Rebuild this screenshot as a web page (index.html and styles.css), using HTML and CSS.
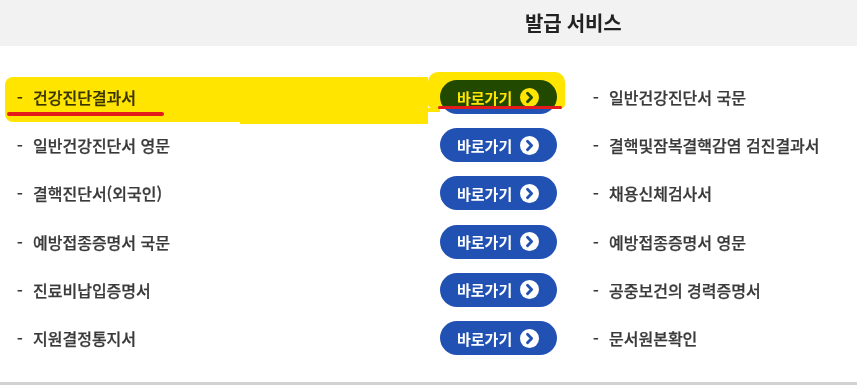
FILE: index.html
```html
<!DOCTYPE html>
<html lang="ko">
<head>
<meta charset="utf-8">
<link rel="stylesheet" href="styles.css">
</head>
<body>
<div class="page">
  <header class="head"><h1 class="title">발급 서비스</h1></header>
  <section class="list">
    <div class="row">
      <div class="item"><span class="dash">-</span>건강진단결과서</div>
      <a class="go">바로가기<svg class="ico" viewBox="0 0 18 18"><circle cx="9" cy="9" r="9" fill="#fff"/><path d="M7.1 4.9 L11 9 L7.1 13.1" fill="none" stroke="#2152b3" stroke-width="2.7" stroke-linecap="round" stroke-linejoin="round"/></svg></a>
      <div class="item right"><span class="dash">-</span>일반건강진단서 국문</div>
    </div>
    <div class="row">
      <div class="item"><span class="dash">-</span>일반건강진단서 영문</div>
      <a class="go">바로가기<svg class="ico" viewBox="0 0 18 18"><circle cx="9" cy="9" r="9" fill="#fff"/><path d="M7.1 4.9 L11 9 L7.1 13.1" fill="none" stroke="#2152b3" stroke-width="2.7" stroke-linecap="round" stroke-linejoin="round"/></svg></a>
      <div class="item right"><span class="dash">-</span>결핵및잠복결핵감염 검진결과서</div>
    </div>
    <div class="row">
      <div class="item"><span class="dash">-</span>결핵진단서(외국인)</div>
      <a class="go">바로가기<svg class="ico" viewBox="0 0 18 18"><circle cx="9" cy="9" r="9" fill="#fff"/><path d="M7.1 4.9 L11 9 L7.1 13.1" fill="none" stroke="#2152b3" stroke-width="2.7" stroke-linecap="round" stroke-linejoin="round"/></svg></a>
      <div class="item right"><span class="dash">-</span>채용신체검사서</div>
    </div>
    <div class="row">
      <div class="item"><span class="dash">-</span>예방접종증명서 국문</div>
      <a class="go">바로가기<svg class="ico" viewBox="0 0 18 18"><circle cx="9" cy="9" r="9" fill="#fff"/><path d="M7.1 4.9 L11 9 L7.1 13.1" fill="none" stroke="#2152b3" stroke-width="2.7" stroke-linecap="round" stroke-linejoin="round"/></svg></a>
      <div class="item right"><span class="dash">-</span>예방접종증명서 영문</div>
    </div>
    <div class="row">
      <div class="item"><span class="dash">-</span>진료비납입증명서</div>
      <a class="go">바로가기<svg class="ico" viewBox="0 0 18 18"><circle cx="9" cy="9" r="9" fill="#fff"/><path d="M7.1 4.9 L11 9 L7.1 13.1" fill="none" stroke="#2152b3" stroke-width="2.7" stroke-linecap="round" stroke-linejoin="round"/></svg></a>
      <div class="item right"><span class="dash">-</span>공중보건의 경력증명서</div>
    </div>
    <div class="row">
      <div class="item"><span class="dash">-</span>지원결정통지서</div>
      <a class="go">바로가기<svg class="ico" viewBox="0 0 18 18"><circle cx="9" cy="9" r="9" fill="#fff"/><path d="M7.1 4.9 L11 9 L7.1 13.1" fill="none" stroke="#2152b3" stroke-width="2.7" stroke-linecap="round" stroke-linejoin="round"/></svg></a>
      <div class="item right"><span class="dash">-</span>문서원본확인</div>
    </div>
  </section>
  <div class="mark mark-a"></div>
  <div class="mark mark-b"></div>
  <div class="mark mark-c"></div>
  <div class="mark mark-d"></div>
  <div class="pen pen-a"></div>
  <div class="pen pen-b"></div>
</div>
</body>
</html>
```

FILE: styles.css
```css
html, body {
  margin: 0;
  padding: 0;
  background: #fff;
}
body {
  font-family: "Noto Sans CJK KR", "Noto Sans", sans-serif;
  overflow: hidden;
}
.page {
  position: relative;
  width: 857px;
  height: 388px;
}
.head {
  height: 46px;
  background: #f2f2f2;
  display: flex;
  align-items: center;
  padding-left: 525px;
  box-sizing: border-box;
}
.title {
  margin: 0;
  font-size: 20px;
  font-weight: 700;
  color: #222;
  letter-spacing: -0.2px;
  line-height: 1;
}
.list {
  box-sizing: border-box;
  height: 339px;
  padding-top: 27px;
  border-bottom: 3px solid #d2d2d2;
}
.row {
  display: grid;
  grid-template-columns: 440px 117px 1fr;
  align-items: center;
  height: 48.2px;
}
.item {
  padding-left: 17px;
  font-size: 16px;
  font-weight: 500;
  color: #3a3a3a;
  white-space: nowrap;
  display: flex;
  align-items: center;
  -webkit-text-stroke: 0.25px #3a3a3a;
}
.item.right {
  padding-left: 36px;
}
.dash {
  width: 16px;
  display: inline-block;
}
.go {
  display: flex;
  align-items: center;
  justify-content: space-between;
  box-sizing: border-box;
  height: 34px;
  border-radius: 17px;
  background: #2152b3;
  color: #fff;
  font-size: 15px;
  font-weight: 700;
  padding: 0 18px 0 17px;
}
.ico {
  width: 19px;
  height: 19px;
}
.mark {
  position: absolute;
  background: #ffe500;
  mix-blend-mode: multiply;
}
.mark-a {
  left: 5px;
  top: 77px;
  width: 235px;
  height: 45px;
  border-radius: 8px 0 0 8px;
}
.mark-b {
  left: 240px;
  top: 77px;
  width: 188px;
  height: 47px;
}
.mark-c {
  left: 428px;
  top: 72px;
  width: 137px;
  height: 36px;
  border-radius: 10px 10px 4px 4px;
}
.mark-d {
  left: 428px;
  top: 108px;
  width: 12px;
  height: 4px;
}
.pen {
  position: absolute;
  background: #e31b1b;
  border-radius: 2px;
}
.pen-a {
  left: 7px;
  top: 112px;
  width: 157px;
  height: 4px;
}
.pen-b {
  left: 438px;
  top: 106px;
  width: 124px;
  height: 3px;
}
```
